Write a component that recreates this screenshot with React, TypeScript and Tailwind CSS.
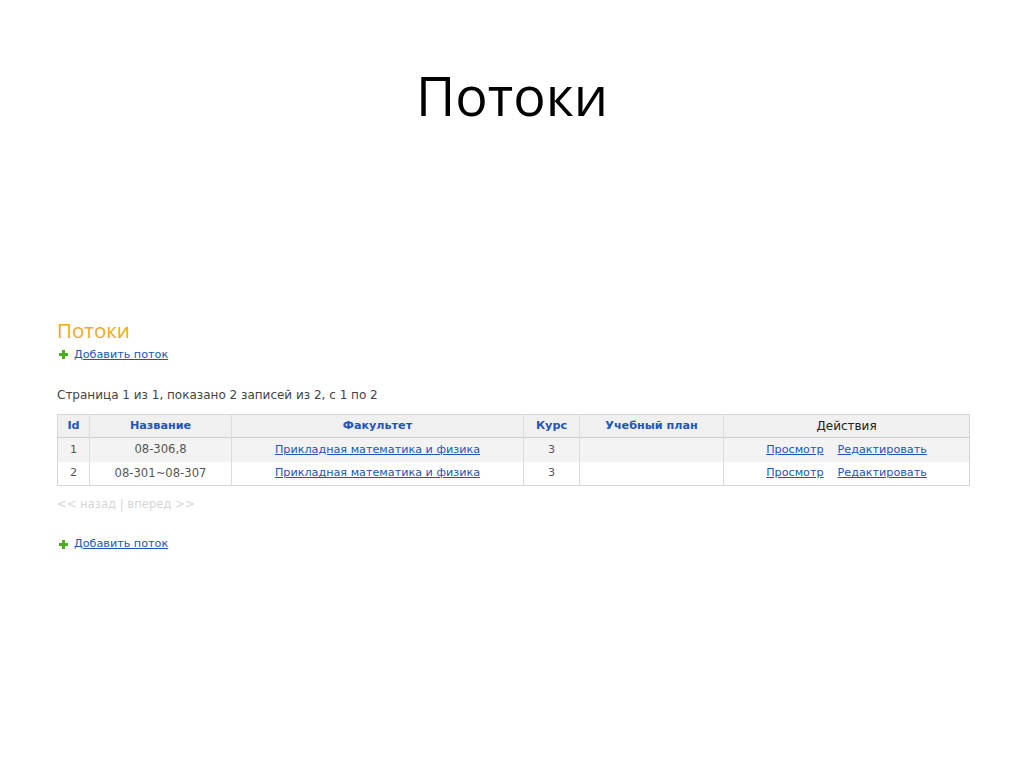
const rows = [
  { id: 1, name: '08-306,8', faculty: 'Прикладная математика и физика', course: 3, plan: '' },
  { id: 2, name: '08-301~08-307', faculty: 'Прикладная математика и физика', course: 3, plan: '' },
];

const PlusIcon = () => (
  <svg width="9" height="9" viewBox="0 0 9 9" className="inline-block ml-[2px]">
    <path d="M3 0h3v3h3v3H6v3H3V6H0V3h3z" fill="#4caf1e" />
  </svg>
);

const AddLink = () => (
  <div className="flex items-center gap-[6px]">
    <PlusIcon />
    <a href="#" className="text-[#2255bb] underline">Добавить поток</a>
  </div>
);

const App = () => {
  return (
    <div className="w-[1024px] h-[768px] bg-white overflow-hidden" style={{ fontFamily: '"DejaVu Sans", Verdana, sans-serif' }}>
      <h1 className="text-center text-[54px] leading-none pt-[68px] text-black" style={{ fontFamily: '"Open Sans", sans-serif' }}>
        Потоки
      </h1>
      <div className="px-[57px] pt-[198px] text-[11.2px] text-[#333]">
        <h2 className="text-[20.5px] leading-none text-[#f5a623] mb-[6px]" style={{ fontFamily: '"Open Sans", sans-serif' }}>Потоки</h2>
        <AddLink />
        <p className="mt-[23px] text-[12px] text-[#444]">Страница 1 из 1, показано 2 записей из 2, с 1 по 2</p>
        <table className="mt-[10px] w-[913px] border border-[#d6d6d6] border-collapse">
          <thead>
            <tr className="bg-[#f0f0f0] h-[23px] border-b border-[#cfcfcf]">
              <th className="w-[32px] border-r border-[#dcdcdc] font-bold text-[#2255bb]">Id</th>
              <th className="w-[142px] border-r border-[#dcdcdc] font-bold text-[#2255bb]">Название</th>
              <th className="w-[292px] border-r border-[#dcdcdc] font-bold text-[#2255bb]">Факультет</th>
              <th className="w-[56px] border-r border-[#dcdcdc] font-bold text-[#2255bb]">Курс</th>
              <th className="w-[144px] border-r border-[#dcdcdc] font-bold text-[#2255bb]">Учебный план</th>
              <th className="font-normal text-[12px] text-[#222]">Действия</th>
            </tr>
          </thead>
          <tbody>
            {rows.map((r, i) => (
              <tr key={r.id} className={`h-[24px] text-center text-[#555] ${i === 0 ? 'bg-[#f3f3f3]' : 'bg-white'}`}>
                <td className="border-r border-[#dcdcdc]">{r.id}</td>
                <td className="border-r border-[#dcdcdc] text-[11.6px]">{r.name}</td>
                <td className="border-r border-[#dcdcdc]">
                  <a href="#" className="text-[#2255bb] underline">{r.faculty}</a>
                </td>
                <td className="border-r border-[#dcdcdc]">{r.course}</td>
                <td className="border-r border-[#dcdcdc]">{r.plan}</td>
                <td>
                  <a href="#" className="text-[#2255bb] underline">Просмотр</a>
                  <a href="#" className="text-[#2255bb] underline ml-[14px]">Редактировать</a>
                </td>
              </tr>
            ))}
          </tbody>
        </table>
        <p className="mt-[10px] text-[11.6px] text-[#d6d6d6]">&lt;&lt; назад | вперед &gt;&gt;</p>
        <div className="mt-[22px]">
          <AddLink />
        </div>
      </div>
    </div>
  );
};

export default App;
